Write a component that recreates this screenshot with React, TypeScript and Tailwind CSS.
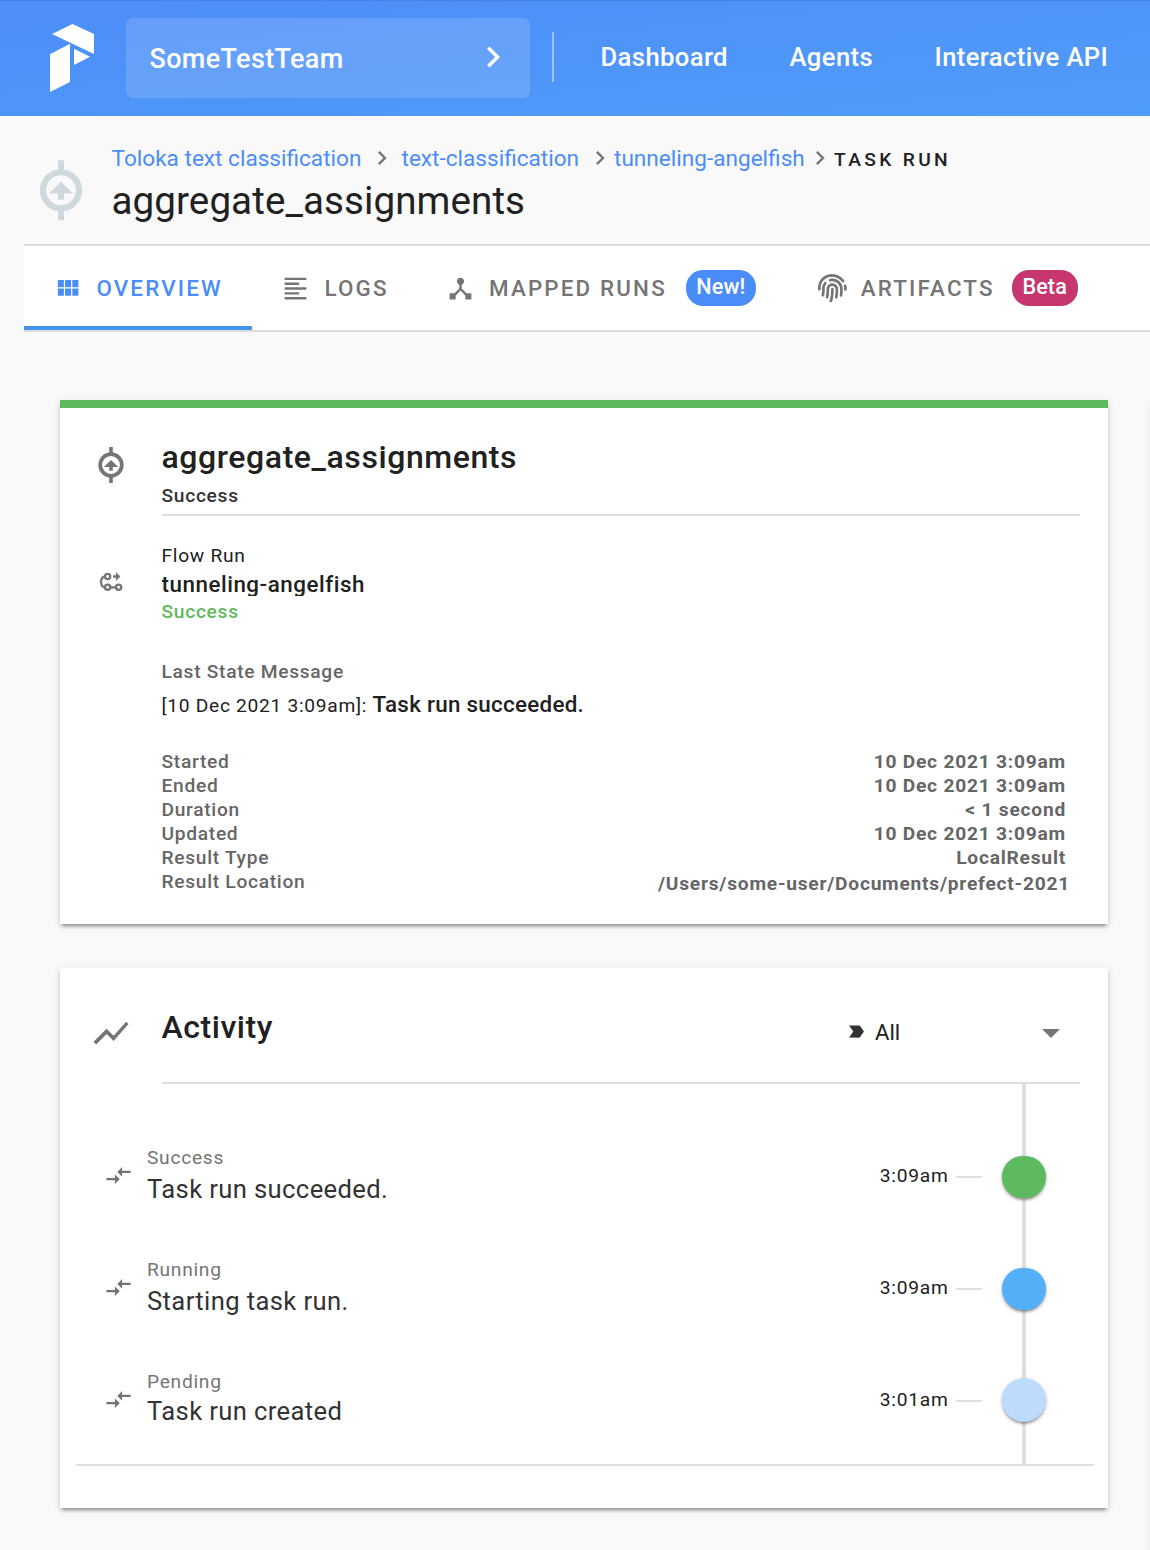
import type { ReactNode } from "react";
import { FaFingerprint } from "react-icons/fa";

function Glyph({ d, className }: { d: string; className: string }) {
  return (
    <svg viewBox="0 0 24 24" fill="currentColor" className={`shrink-0 ${className}`}>
      <path d={d} />
    </svg>
  );
}

const CHEVRON = "M8.59 16.58 13.17 12 8.59 7.41 10 6l6 6-6 6z";
const MODULES =
  "M16 5v6h5V5M10 11h5V5h-5M16 18h5v-6h-5M10 18h5v-6h-5M4 18h5v-6H4M4 11h5V5H4z";
const ALIGN_LEFT =
  "M3 3h18v2H3V3m0 4h12v2H3V7m0 4h18v2H3v-2m0 4h12v2H3v-2m0 4h18v2H3v-2z";
const HUB =
  "M17 16l-4-4V8.82C14.16 8.4 15 7.3 15 6c0-1.66-1.34-3-3-3S9 4.34 9 6c0 1.3.84 2.4 2 2.82V12l-4 4H3v5h5v-3.05l4-4.2 4 4.2V21h5v-5h-4z";
const CHART =
  "M3.5 18.5l6-6 4 4L22 6.92 20.59 5.5l-7.09 8-4-4L2 17l1.5 1.5z";
const LABEL =
  "M3.5 18.99l11 .01c.67 0 1.27-.33 1.63-.84L20.5 12l-4.37-6.16c-.36-.51-.96-.84-1.63-.84l-11 .01L8.34 12 3.5 18.99z";
const COMPARE =
  "M9.01 14H2v2h7.01v3L13 15l-3.99-4v3zm5.98-1v-3H22V8h-7.01V5L11 9l3.99 4z";

function TaskIcon({ className }: { className: string }) {
  return (
    <svg viewBox="0 0 42 60" className={`shrink-0 ${className}`} fill="currentColor">
      <path d="M18 0h6v10h-6zM18 50h6v10h-6z" />
      <circle cx="21" cy="30" r="18" fill="none" stroke="currentColor" strokeWidth="6.2" />
      <path d="M21 21.5 33 33.3h-9V39.5h-6v-6.2H9z" />
    </svg>
  );
}

function FlowIcon({ className }: { className: string }) {
  return (
    <svg viewBox="0 0 24 20" className={`shrink-0 ${className}`} fill="none" stroke="currentColor">
      <circle cx="8.6" cy="4.5" r="2.6" strokeWidth="2.3" />
      <circle cx="8.6" cy="15.3" r="2.6" strokeWidth="2.3" />
      <circle cx="19.6" cy="15.3" r="2.6" strokeWidth="2.3" />
      <path d="M11 15.3h6M6 4.3C.7 5.6.7 14.2 6 15.5" strokeWidth="2.3" />
      <path d="M14 3.3h2.9V0L21.4 4.5 16.9 9V5.7H14z" fill="currentColor" stroke="none" />
    </svg>
  );
}

const cardShadow =
  "shadow-[0_5px_2px_-3px_rgba(0,0,0,0.2),0_3px_3px_0_rgba(0,0,0,0.14),0_2px_8px_0_rgba(0,0,0,0.12)]";

function Header() {
  return (
    <header className="flex h-[116px] items-start border-t border-[#4784e0] bg-linear-to-br from-[#4d8df8] to-[#509cf9] text-white">
      <svg viewBox="0 0 44 68" className="mt-[23px] ml-[50px] h-[68px] w-[44px] shrink-0" fill="currentColor">
        <path d="M2 10 22.5 0 44 10v20zM0 30.3 20 19.7V58L0 68zM24 24.7l16 8-16 8.3z" />
      </svg>
      <div className="mt-[17px] ml-8 flex h-20 w-[404px] items-center justify-between rounded-[7px] bg-white/13 pr-4 pl-[23.5px]">
        <span className="pt-[2px] text-[27px] leading-10 font-medium tracking-[0.35px]">SomeTestTeam</span>
        <Glyph d={CHEVRON} className="-mt-[3px] h-[42px] w-[42px]" />
      </div>
      <div className="mt-[31px] ml-[22px] h-[50px] w-[2px] bg-white/45" />
      <nav className="mt-[36px] ml-[46.5px] flex text-[25.6px] leading-10 font-medium tracking-[0.4px] whitespace-nowrap">
        <a className="w-[189px]">Dashboard</a>
        <a className="w-[145px]">Agents</a>
        <a>Interactive API</a>
      </nav>
    </header>
  );
}

function Breadcrumbs() {
  return (
    <section className="flex h-[128px] items-start">
      <TaskIcon className="mt-[44px] ml-[39.5px] h-[60.5px] w-[42px] text-[#cfd8dc]" />
      <div className="ml-[30px] pt-7 whitespace-nowrap">
        <div className="flex h-7 items-center text-[22.6px] leading-7 text-[#4b8df8]">
          <a className="w-[256px] pt-[2px]">Toloka text classification</a>
          <Glyph d={CHEVRON} className="h-7 w-7 text-[#757575]" />
          <a className="ml-[6px] w-[179px] pt-[2px]">text-classification</a>
          <Glyph d={CHEVRON} className="ml-[5px] h-7 w-7 text-[#757575]" />
          <a className="w-[192px] pt-[2px] pl-[0.5px]">tunneling-angelfish</a>
          <Glyph d={CHEVRON} className="h-7 w-7 text-[#757575]" />
          <span className="pt-[4px] pl-[0.5px] text-[19.2px] font-medium tracking-[3.35px] text-[#212121]">TASK RUN</span>
        </div>
        <h1 className="mt-[4px] text-[38.6px] leading-[49px] tracking-[0.08px] text-[#212121]">aggregate_assignments</h1>
      </div>
    </section>
  );
}

function Tab({
  icon,
  label,
  active,
  width,
  children,
}: {
  icon: ReactNode;
  label: string;
  active?: boolean;
  width: string;
  children?: ReactNode;
}) {
  return (
    <div
      className={`flex shrink-0 items-center border-b-4 pt-1 pl-[29.4px] whitespace-nowrap ${width} ${
        active ? "border-[#4494ec] text-[#4b8df8]" : "border-transparent text-[#757575]"
      }`}
    >
      {icon}
      <span className="ml-[14px] text-[22.4px] leading-8 font-medium tracking-[2.15px]">{label}</span>
      {children}
    </div>
  );
}

function Tabs() {
  return (
    <div className="ml-6 flex h-[88px] items-stretch border-y-2 border-[#dcdcdc] bg-white">
      <Tab active width="w-[228px]" icon={<Glyph d={MODULES} className="h-[29px] w-[29px]" />} label="OVERVIEW" />
      <Tab width="w-[164.6px]" icon={<Glyph d={ALIGN_LEFT} className="h-[29px] w-[29px]" />} label="LOGS" />
      <Tab width="w-[372px]" icon={<Glyph d={HUB} className="h-[29px] w-[29px]" />} label="MAPPED RUNS">
        <span className="ml-[19px] flex h-9 w-[70px] justify-center rounded-[17px] bg-[#4b8df8] text-[21.6px] leading-[34px] font-medium tracking-[0.15px] text-white">
          New!
        </span>
      </Tab>
      <Tab width="w-[362px]" icon={<FaFingerprint className="h-[28.8px] w-[28.8px] shrink-0" />} label="ARTIFACTS">
        <span className="ml-[17px] flex h-9 w-[66px] justify-center rounded-[17px] bg-[#c7366e] text-[21.6px] leading-[34px] font-medium tracking-[0.15px] text-white">
          Beta
        </span>
      </Tab>
    </div>
  );
}

const details: [string, string][] = [
  ["Started", "10 Dec 2021 3:09am"],
  ["Ended", "10 Dec 2021 3:09am"],
  ["Duration", "< 1 second"],
  ["Updated", "10 Dec 2021 3:09am"],
  ["Result Type", "LocalResult"],
];

function Summary() {
  return (
    <section className={`h-[524px] border-t-8 border-[#5eba5e] bg-white ${cardShadow}`}>
      <div className="flex items-start pt-[38px]">
        <TaskIcon className="mt-[1px] ml-[38px] h-9 w-[26px] text-[#757575]" />
        <div className="ml-[38px] w-[918px] border-b-2 border-[#dfdfdf] text-[#212121]">
          <h2 className="-ml-[0.5px] h-8 overflow-hidden text-[32px] leading-[23px] font-medium tracking-[0.58px]">
            aggregate_assignments
          </h2>
          <p className="-ml-[0.5px] h-[36px] pt-[6px] text-[19.2px] leading-6 font-medium tracking-[0.7px] text-[#333]">
            Success
          </p>
        </div>
      </div>
      <div className="flex items-start pt-[27px]">
        <FlowIcon className="mt-[29px] ml-[38.5px] h-5 w-6 text-[#757575]" />
        <div className="ml-[39px] text-[19.2px] leading-6 tracking-[0.7px] text-[#212121]">
          <p className="mt-px">Flow Run</p>
          <p className="mt-[4px] h-[24px] overflow-hidden text-[22.4px] leading-6 font-medium tracking-[0.52px]">
            tunneling-angelfish
          </p>
          <p className="mt-[4px] font-medium text-[#5eba5e]">Success</p>
          <p className="mt-[36px] font-medium text-[#666]">Last State Message</p>
          <p className="mt-[6px] leading-[28px]">
            [10 Dec 2021 3:09am]: <b className="text-[22.4px] font-medium tracking-[0.28px]">Task run succeeded.</b>
          </p>
        </div>
      </div>
      <dl className="mt-[30px] ml-[101.5px] w-[907.5px] text-[19.2px] leading-6 tracking-[0.7px] text-[#666]">
        {details.map(([k, v]) => (
          <div key={k} className="flex justify-between pr-[3px]">
            <dt className="font-medium">{k}</dt>
            <dd className="font-bold tracking-[0.77px]">{v}</dd>
          </div>
        ))}
        <div className="flex justify-between">
          <dt className="font-medium">Result Location</dt>
          <dd className="mt-[2px] w-[411px] overflow-hidden font-bold tracking-[0.75px] whitespace-nowrap">
            /Users/some-user/Documents/prefect-2021
          </dd>
        </div>
      </dl>
    </section>
  );
}

function Event({ state, message, time, color, last }: { state: string; message: string; time: string; color: string; last?: boolean }) {
  return (
    <li className="flex h-28 items-start">
      <Glyph d={COMPARE} className="mt-[16px] ml-[44px] h-[29px] w-[29px] text-[#757575]" />
      <div className="ml-[14px] flex-1 whitespace-nowrap">
        <p className="pt-px text-[19.2px] leading-6 tracking-[0.72px] text-[#757575]">{state}</p>
        <p className={`text-[25.6px] leading-8 tracking-[0.38px] text-[#333] ${last ? "mt-[1px]" : "mt-[3px]"}`}>
          {message}
        </p>
      </div>
      <time className="mt-[19px] mr-[7.5px] text-[19.2px] leading-6 tracking-[0.75px] text-[#212121]">{time}</time>
      <span className="mt-[31px] mr-5 h-[2px] w-[26px] bg-[#dfdfdf]" />
      <span
        className={`mr-[62px] w-11 shadow-[0_4px_2px_-3px_rgba(0,0,0,0.2),0_2px_3px_0_rgba(0,0,0,0.24),0_1px_5px_0_rgba(0,0,0,0.12)] ${
          last ? "mt-[9px] h-11 rounded-full" : "mt-[11px] h-[42px] rounded-[20.5px]"
        } ${color}`}
      />
    </li>
  );
}

function Activity() {
  return (
    <section className={`mt-11 h-[540px] bg-white ${cardShadow}`}>
      <div className="flex h-[116px] items-start">
        <Glyph d={CHART} className="mt-[43.5px] ml-[30px] h-[42px] w-[42px] text-[#757575]" />
        <div className="ml-[30px] flex h-[116px] w-[918px] items-start border-b-2 border-[#dfdfdf] pt-12">
          <h2 className="-ml-[0.5px] h-8 w-[684.5px] overflow-hidden text-[32px] leading-[23px] font-medium tracking-[0.55px] text-[#212121]">
            Activity
          </h2>
          <Glyph d={LABEL} className="mt-[5px] h-[21px] w-[21px] text-[#333]" />
          <span className="ml-[8px] w-[167px] text-[22.2px] leading-[33px] text-[#212121]">All</span>
          <svg viewBox="0 0 18 9" className="mt-[12.5px] h-[9px] w-[18px] text-[#757575]" fill="currentColor">
            <path d="M0 0h18L9 9z" />
          </svg>
        </div>
      </div>
      <div className="relative mr-[14px] ml-4 h-[382px] border-b-2 border-[#dfdfdf]">
        <div className="absolute top-0 left-[946px] h-[380px] w-1 bg-[#dfdfdf]" />
        <ul className="relative -mr-[14px] -ml-4 pt-[61px]">
          <Event state="Success" message="Task run succeeded." time="3:09am" color="bg-[#5eba5e]" />
          <Event state="Running" message="Starting task run." time="3:09am" color="bg-[#54aff9]" />
          <Event last state="Pending" message="Task run created" time="3:01am" color="bg-[#bddbfc]" />
        </ul>
      </div>
    </section>
  );
}

export default function App() {
  return (
    <div className="h-[1550px] w-[1150px] overflow-hidden bg-[#f9f9f9] font-['Roboto',sans-serif]">
      <Header />
      <Breadcrumbs />
      <Tabs />
      <main className="flex items-start gap-11 pt-[68px] pl-[60px]">
        <div className="w-[1048px] shrink-0">
          <Summary />
          <Activity />
        </div>
        <aside className={`h-[1200px] w-[600px] shrink-0 bg-white ${cardShadow}`} />
      </main>
    </div>
  );
}
